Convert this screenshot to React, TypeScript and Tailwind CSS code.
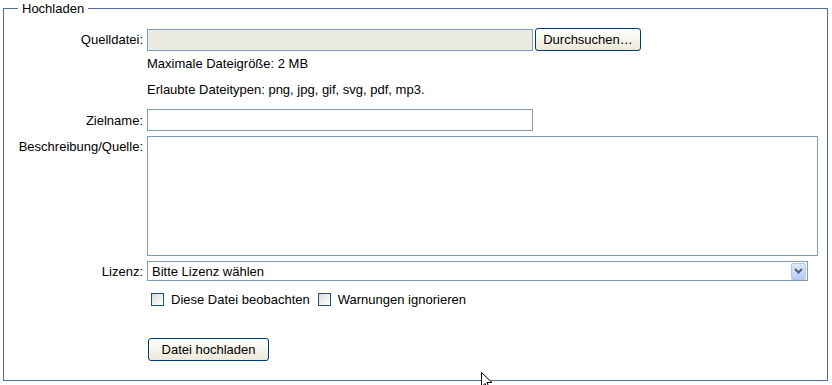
import React from 'react';

const Label = ({ children, className = '' }: { children?: React.ReactNode; className?: string }) => (
  <div className={`w-[143px] shrink-0 pr-[4px] text-right ${className}`}>{children}</div>
);

const Checkbox = ({ label }: { label: string }) => (
  <label className="flex items-center">
    <span className="block h-[13px] w-[13px] border border-[#1c5180] bg-gradient-to-br from-[#dcdcd6] to-[#ffffff]" />
    <span className="ml-[7px]">{label}</span>
  </label>
);

const App = () => {
  return (
    <div className="relative h-[385px] w-[832px] overflow-hidden bg-white pl-[3px] pt-[1px] text-[13px] leading-[15px] text-black [font-family:'Liberation_Sans',Arial,sans-serif]">
      <fieldset className="h-[380px] w-[825px] border border-[#4f6f98]">
        <legend className="ml-[14px] px-[4px]">Hochladen</legend>

        {/* Quelldatei */}
        <div className="mt-[12px] flex items-center">
          <Label>Quelldatei:</Label>
          <div className="h-[22px] w-[386px] border border-[#7f9db9] bg-[#ebebe4]" />
          <button className="ml-[2px] h-[23px] w-[106px] rounded-[3px] border border-[#003c74] bg-gradient-to-b from-[#ffffff] to-[#ece9d8]">
            Durchsuchen…
          </button>
        </div>

        <div className="mt-[5px] flex">
          <Label />
          <div>Maximale Dateigröße: 2 MB</div>
        </div>
        <div className="mt-[11px] flex">
          <Label />
          <div>Erlaubte Dateitypen: png, jpg, gif, svg, pdf, mp3.</div>
        </div>

        {/* Zielname */}
        <div className="mt-[12px] flex items-center">
          <Label>Zielname:</Label>
          <div className="h-[22px] w-[386px] border border-[#7f9db9] bg-white" />
        </div>

        {/* Beschreibung */}
        <div className="mt-[5px] flex items-start">
          <Label className="pt-[3px]">Beschreibung/Quelle:</Label>
          <div className="h-[120px] w-[671px] border border-[#7f9db9] bg-white" />
        </div>

        {/* Lizenz */}
        <div className="mt-[5px] flex items-center">
          <Label>Lizenz:</Label>
          <div className="flex h-[20px] w-[661px] items-center border border-[#7f9db9] bg-white">
            <span className="flex-1 pl-[4px]">Bitte Lizenz wählen</span>
            <span className="mr-[1px] flex h-[17px] w-[15px] items-center justify-center rounded-[2px] border border-[#b3c6ee] bg-gradient-to-b from-[#dfe8fc] to-[#b7c9f5]">
              <svg width="9" height="6" viewBox="0 0 9 6">
                <path d="M1 1 L4.5 4.5 L8 1" fill="none" stroke="#4d6185" strokeWidth="2" />
              </svg>
            </span>
          </div>
        </div>

        {/* Checkboxes */}
        <div className="mt-[11px] flex items-center">
          <Label />
          <div className="ml-[4px] flex items-center gap-[8px]">
            <Checkbox label="Diese Datei beobachten" />
            <Checkbox label="Warnungen ignorieren" />
          </div>
        </div>

        <div className="mt-[31px] flex">
          <Label />
          <button className="ml-[1px] h-[23px] w-[121px] rounded-[3px] border border-[#003c74] bg-gradient-to-b from-[#ffffff] to-[#ece9d8]">
            Datei hochladen
          </button>
        </div>
      </fieldset>

      {/* mouse pointer */}
      <svg className="absolute left-[481px] top-[372px]" width="12" height="19" viewBox="0 0 12 19">
        <path d="M0.5 0.5 L0.5 15 L4 11.5 L6.5 17.5 L8.5 16.5 L6 10.5 L11 10.5 Z" fill="white" stroke="black" strokeWidth="1" />
      </svg>
    </div>
  );
};

export default App;
